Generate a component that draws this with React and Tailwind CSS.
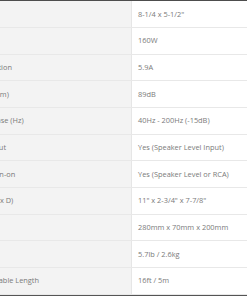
import React from "react";

const rows = [
  ["Speaker", "8-1/4 x 5-1/2\""],
  ["Power", "160W"],
  ["Consumption", "5.9A"],
  ["SPL (1W/1m)", "89dB"],
  ["LF Response (Hz)", "40Hz - 200Hz (-15dB)"],
  ["Signal Input", "Yes (Speaker Level Input)"],
  ["Signal Turn-on", "Yes (Speaker Level or RCA)"],
  ["In. (W x H x D)", "11\" x 2-3/4\" x 7-7/8\""],
  ["Metric", "280mm x 70mm x 200mm"],
  ["Weight", "5.7lb / 2.6kg"],
  ["Remote Cable Length", "16ft / 5m"],
];

export default function App() {
  return (
    <div className="w-[247px] h-[296px] overflow-hidden bg-white font-['Open_Sans',sans-serif] text-[7.4px] text-[#7a7a7a]">
      <div className="h-[1.33px] bg-[#4d4d4d]" />
      {rows.map(([label, value], i) => (
        <div key={i} className="flex h-[26.67px] border-b border-[#e8e8e8] last:border-b-0">
          <div className="ml-[-40px] w-[172px] shrink-0 bg-[#f3f3f3] border-r border-[#e6e6e6] pl-[5.4px] flex items-center whitespace-nowrap">
            {label}
          </div>
          <div className="flex-1 pl-[6px] flex items-center whitespace-nowrap">{value}</div>
        </div>
      ))}
      <div className="h-[2px] bg-[#555]" />
    </div>
  );
}
